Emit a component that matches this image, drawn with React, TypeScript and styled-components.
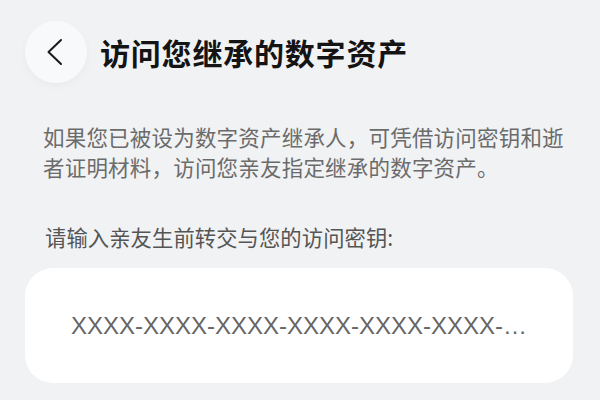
import { FunctionComponent } from "react";
import styled, { createGlobalStyle } from "styled-components";

const GlobalStyle = createGlobalStyle`
  html, body {
    margin: 0;
    padding: 0;
    background: #f1f2f4;
  }
  body {
    font-family: "Noto Sans CJK SC", "Noto Sans", sans-serif;
  }
`;

const BackIcon: FunctionComponent = () => (
  <svg width="18" height="28" viewBox="0 0 18 28" fill="none">
    <path
      d="M16 2 L3.5 14 L16 26"
      stroke="#1a1a1a"
      strokeWidth="2"
      strokeLinecap="round"
      strokeLinejoin="round"
    />
  </svg>
);

export default function App() {
  return (
    <>
      <GlobalStyle />
      <Page>
        <Header>
          <BackButton aria-label="返回">
            <BackIcon />
          </BackButton>
          <Title>访问您继承的数字资产</Title>
        </Header>
        <Intro>
          如果您已被设为数字资产继承人，可凭借访问密钥和逝者证明材料，访问您亲友指定继承的数字资产。
        </Intro>
        <FieldLabel>请输入亲友生前转交与您的访问密钥:</FieldLabel>
        <KeyCard>
          <KeyText>XXXX-XXXX-XXXX-XXXX-XXXX-XXXX-…</KeyText>
        </KeyCard>
      </Page>
    </>
  );
}

const Page = styled.div`
  width: 600px;
  height: 400px;
  box-sizing: border-box;
  padding: 21px 27px 0 25px;
  overflow: hidden;
`;

const Header = styled.div`
  display: flex;
  align-items: center;
  gap: 13px;
`;

const BackButton = styled.button`
  width: 62px;
  height: 62px;
  flex: none;
  border: none;
  border-radius: 50%;
  background: #f8f9fa;
  box-shadow: 0 3px 10px rgba(0, 0, 0, 0.035);
  display: flex;
  align-items: center;
  justify-content: center;
  padding: 0 4px 0 0;
  cursor: pointer;
`;

const Title = styled.h1`
  margin: 0;
  font-size: 30px;
  font-weight: 700;
  letter-spacing: 0.8px;
  color: #141414;
  line-height: 40px;
`;

const Intro = styled.p`
  margin: 39px 0 0 18px;
  font-size: 21.5px;
  letter-spacing: 0.2px;
  line-height: 30px;
  color: #6b6b6b;
`;

const FieldLabel = styled.div`
  margin: 40px 0 0 20px;
  font-size: 21.3px;
  letter-spacing: 0.1px;
  line-height: 30px;
  color: #555555;
`;

const KeyCard = styled.div`
  margin-top: 16px;
  height: 115px;
  border-radius: 28px;
  background: #ffffff;
  display: flex;
  align-items: center;
  justify-content: center;
`;

const KeyText = styled.span`
  font-family: "Liberation Sans", Arial, sans-serif;
  font-size: 24px;
  color: #666666;
  white-space: nowrap;
`;
